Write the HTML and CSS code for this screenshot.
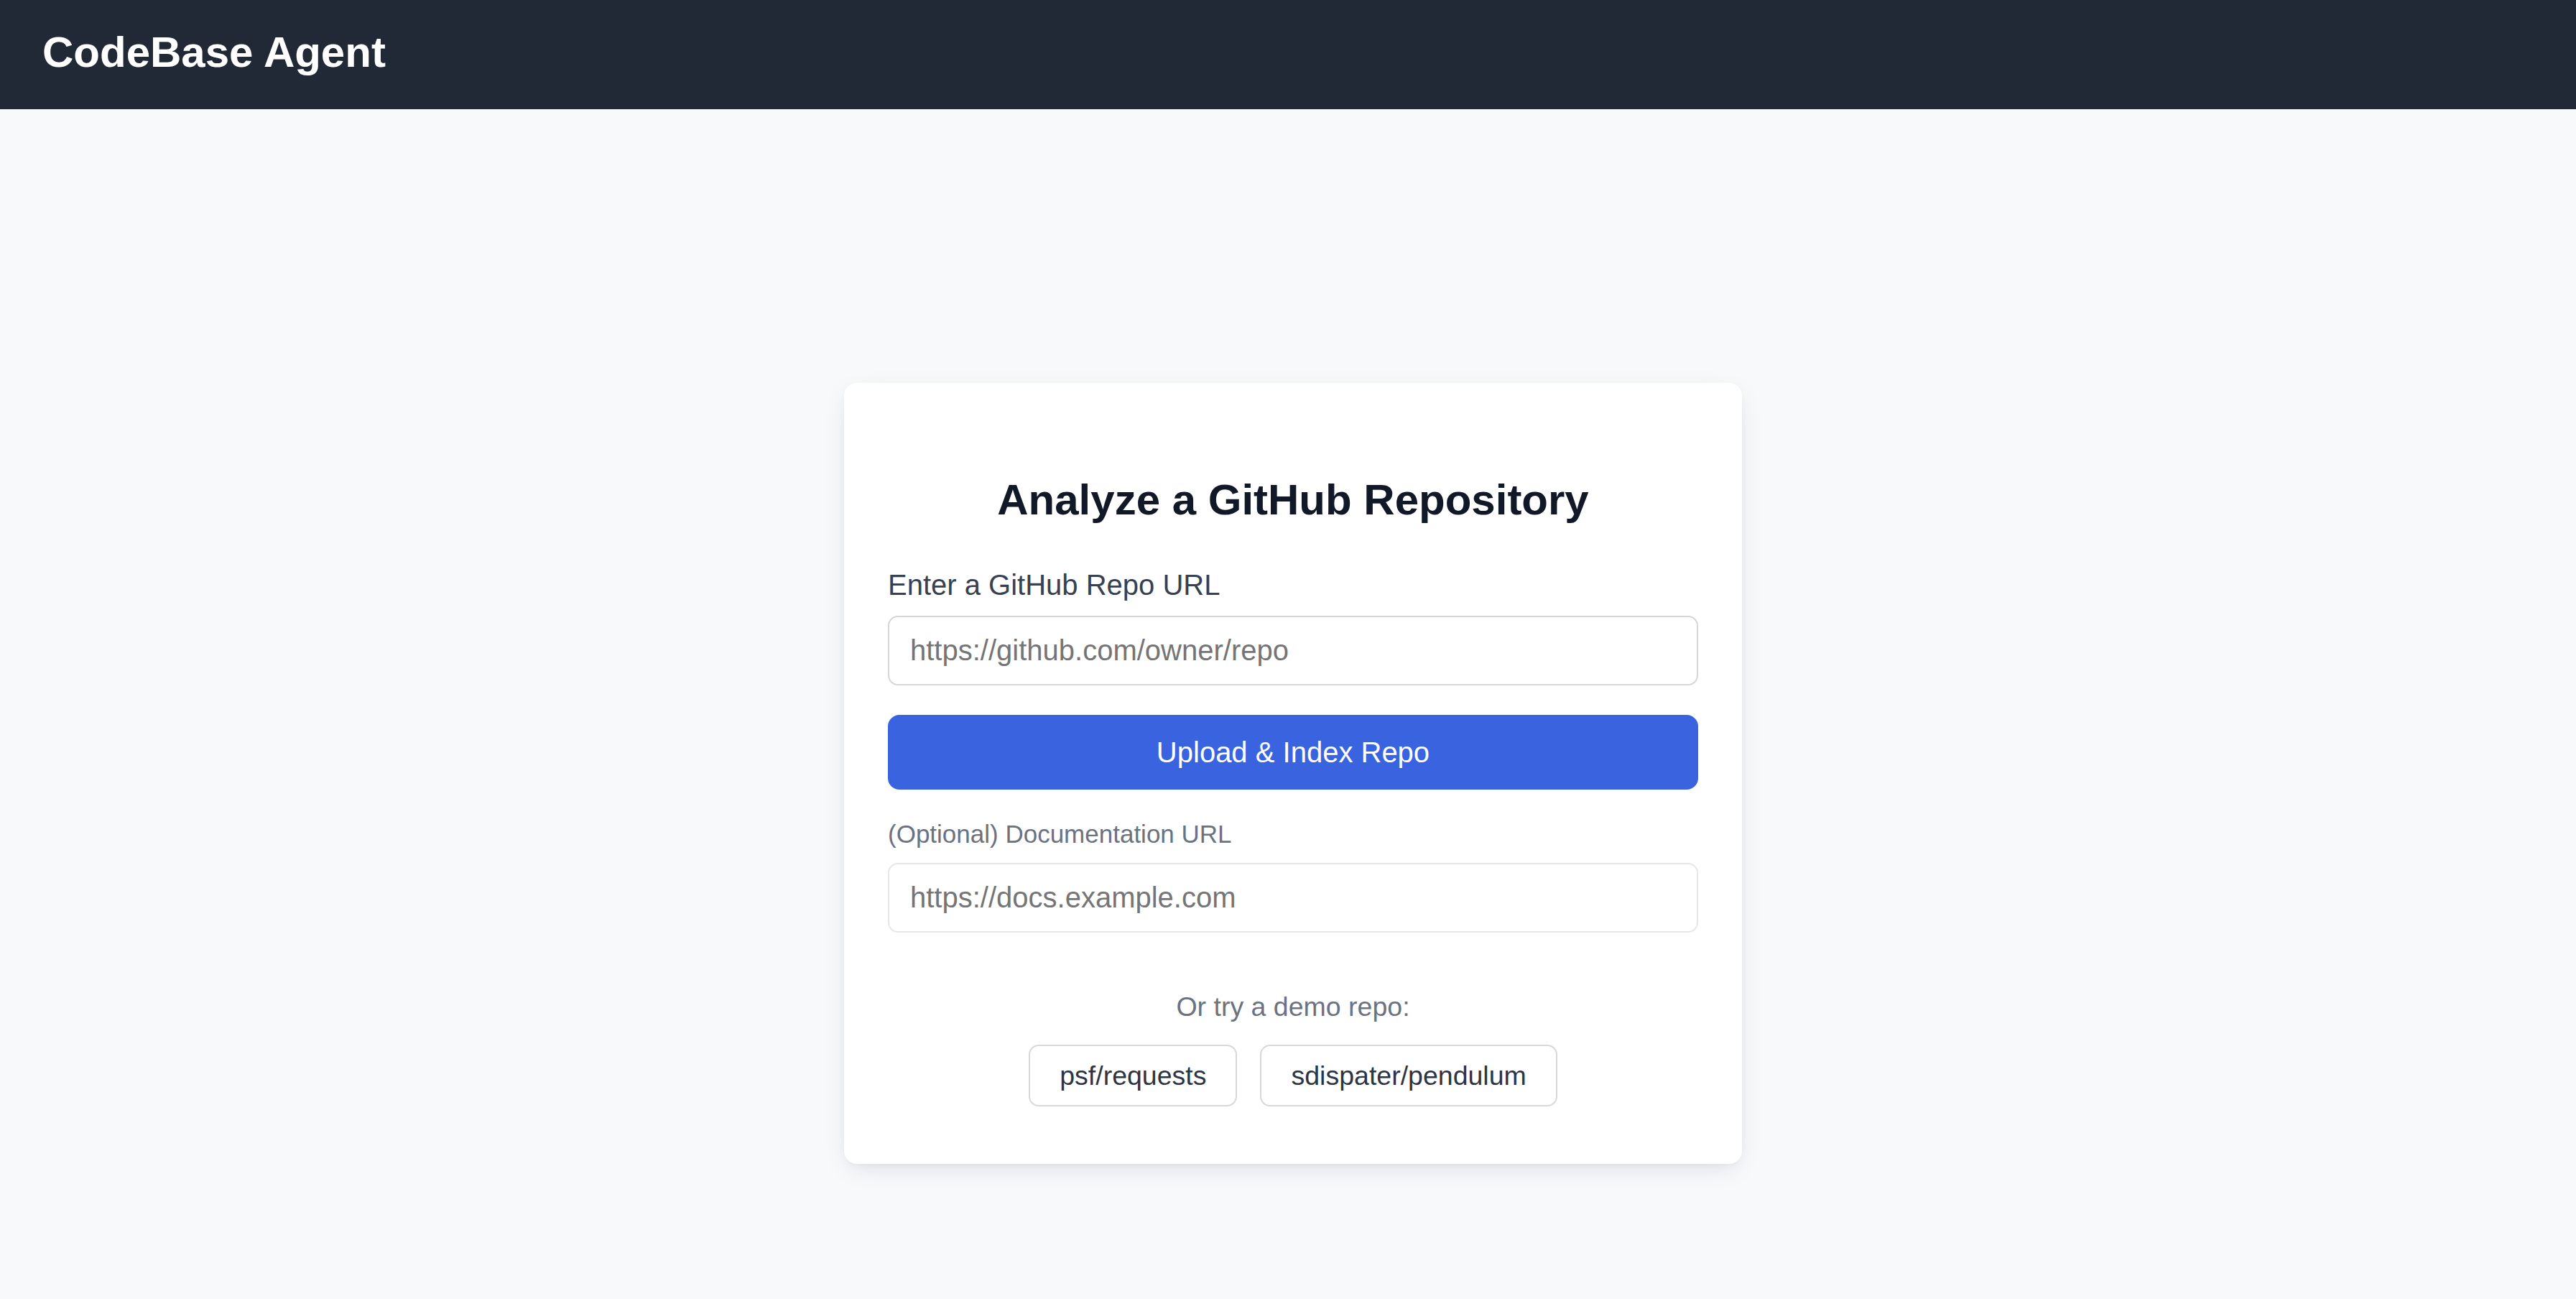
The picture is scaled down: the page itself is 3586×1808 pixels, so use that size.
FILE: index.html
```html
<!DOCTYPE html>
<html lang="en">
<head>
<meta charset="utf-8">
<title>CodeBase Agent</title>
<link rel="stylesheet" href="styles.css">
</head>
<body>
<header class="topbar">
  <h1 class="brand">CodeBase Agent</h1>
</header>
<main class="main">
  <section class="card">
    <h2 class="card-title">Analyze a GitHub Repository</h2>
    <label class="label" for="repo">Enter a GitHub Repo URL</label>
    <input class="field field-primary" id="repo" type="text" placeholder="https://github.com/owner/repo">
    <button class="btn-primary" type="button">Upload &amp; Index Repo</button>
    <label class="label-muted" for="docs">(Optional) Documentation URL</label>
    <input class="field field-light" id="docs" type="text" placeholder="https://docs.example.com">
    <p class="demo-title">Or try a demo repo:</p>
    <div class="demo-row">
      <button class="demo-btn" type="button">psf/requests</button>
      <button class="demo-btn" type="button">sdispater/pendulum</button>
    </div>
  </section>
</main>
</body>
</html>
```

FILE: styles.css
```css
* { box-sizing: border-box; }

html, body {
  margin: 0;
  padding: 0;
}

body {
  background: #f8f9fb;
  font-family: "Liberation Sans", Arial, Helvetica, sans-serif;
  min-height: 1808px;
}

.topbar {
  background: #212936;
  height: 152px;
  padding: 33px 59px 0;
}

.brand {
  margin: 0;
  color: #ffffff;
  font-size: 60px;
  line-height: 80px;
  font-weight: 700;
}

.main {
  display: flex;
  justify-content: center;
  padding: 381px 0 0 14px;
}

.card {
  width: 1250px;
  background: #ffffff;
  border-radius: 18px;
  box-shadow: 0 10px 36px -8px rgba(15, 23, 42, 0.13), 0 4px 14px -6px rgba(15, 23, 42, 0.08);
  padding: 123px 61px 80px;
  display: flex;
  flex-direction: column;
}

.card-title {
  margin: 0 0 48px;
  text-align: center;
  font-size: 60px;
  line-height: 80px;
  font-weight: 700;
  color: #111827;
}

.label {
  display: block;
  font-size: 40px;
  line-height: 60px;
  color: #374151;
  margin-bottom: 13px;
}

.label-muted {
  display: block;
  font-size: 35px;
  line-height: 50px;
  color: #6b7280;
  margin: 37px 0 15px;
}

.field {
  display: block;
  width: 100%;
  height: 97px;
  padding: 0 29px;
  font-family: "Liberation Sans", Arial, Helvetica, sans-serif;
  font-size: 40px;
  color: #111827;
  background: #ffffff;
  border-radius: 14px;
  outline: none;
}

.field::placeholder {
  color: #757575;
}

.field-primary {
  border: 2px solid #d4d6db;
}

.field-light {
  border: 2px solid #e6e7ea;
}

.btn-primary {
  display: block;
  width: 100%;
  height: 104px;
  margin-top: 41px;
  border: none;
  border-radius: 16px;
  background: #3a63e0;
  color: #ffffff;
  font-family: "Liberation Sans", Arial, Helvetica, sans-serif;
  font-size: 40px;
  line-height: 60px;
  padding: 0;
  cursor: pointer;
}

.demo-title {
  margin: 75px 0 25px;
  text-align: center;
  font-size: 37.5px;
  line-height: 56px;
  color: #6b7280;
}

.demo-row {
  display: flex;
  justify-content: center;
  gap: 32px;
}

.demo-btn {
  height: 86px;
  padding: 0 41px;
  background: #ffffff;
  border: 2px solid #d6d8dc;
  border-radius: 14px;
  font-family: "Liberation Sans", Arial, Helvetica, sans-serif;
  font-size: 37.5px;
  color: #2d3544;
  cursor: pointer;
}
```
